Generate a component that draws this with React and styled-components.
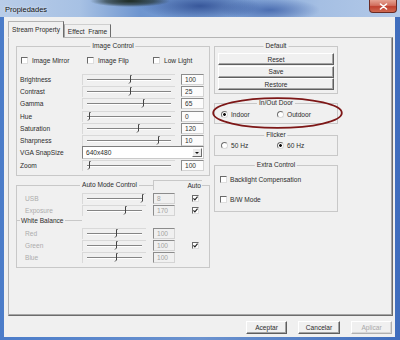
import React from "react";
import styled, { createGlobalStyle } from "styled-components";

const GlobalStyle = createGlobalStyle`
  html, body {
    margin: 0;
    padding: 0;
    background: #fff;
  }
  body {
    font-family: "Liberation Sans", Arial, sans-serif;
    font-size: 6.6px;
    color: #2c2c2c;
  }
`;

const imageSliders = [
  { label: "Brightness", pos: 0.51, value: "100" },
  { label: "Contrast", pos: 0.51, value: "25" },
  { label: "Gamma", pos: 0.67, value: "65" },
  { label: "Hue", pos: 0.02, value: "0" },
  { label: "Saturation", pos: 0.61, value: "120" },
  { label: "Sharpness", pos: 0.85, value: "10" },
];

const autoSliders = [
  { label: "USB", pos: 1, value: "8", auto: true },
  { label: "Exposure", pos: 0.69, value: "170", auto: true },
];

const balanceSliders = [
  { label: "Red", pos: 0.53, value: "100" },
  { label: "Green", pos: 0.53, value: "100", auto: true },
  { label: "Blue", pos: 0.53, value: "100" },
];

const Slider = ({ width, pos }) => (
  <Track $w={width}>
    <Thumb width="5" height="9" viewBox="0 0 5 9" style={{ left: 4 + pos * (width - 9) - 2 }}>
      <path d="M3.6 0.5 H2.5 V7 L1 8.5" fill="none" stroke="#444" strokeWidth="1" />
    </Thumb>
  </Track>
);

const CheckBox = ({ checked }) => (
  <Box>
    {checked && (
      <svg width="5" height="5" viewBox="0 0 5 5">
        <path d="M0.4 2.3 L1.9 3.9 L4.6 0.6" fill="none" stroke="#222" strokeWidth="1.2" />
      </svg>
    )}
  </Box>
);

const App = () => {
  return (
    <>
      <GlobalStyle />
      <Window>
        <TitleBar>
          <TitleText>Propiedades</TitleText>
          <CloseButton>
            <svg width="9" height="7" viewBox="0 0 9 7">
              <path d="M1.5 1 L7.5 6 M7.5 1 L1.5 6" stroke="#fff" strokeWidth="1.6" strokeLinecap="round" />
            </svg>
          </CloseButton>
        </TitleBar>

        <Client>
          <TabStrip>
            <Tab $active $w={56}>Stream Property</Tab>
            <Tab $w={47}>Effect&nbsp; Frame</Tab>
          </TabStrip>

          <TabPage>
            <LeftCol>
              <Group $h={130}>
                <GroupTitle>Image Control</GroupTitle>
                <CheckRow>
                  <CheckItem $w={66}><CheckBox />Image Mirror</CheckItem>
                  <CheckItem $w={66}><CheckBox />Image Flip</CheckItem>
                  <CheckItem><CheckBox />Low Light</CheckItem>
                </CheckRow>
                <SliderList>
                  {imageSliders.map((s) => (
                    <Row key={s.label} $pad={3}>
                      <Label $w={62}>{s.label}</Label>
                      <Slider width={93} pos={s.pos} />
                      <ValueBox $w={23} $ml={6}>{s.value}</ValueBox>
                    </Row>
                  ))}
                  <Row $pad={3}>
                    <Label $w={62}>VGA SnapSize</Label>
                    <Combo>
                      <span>640x480</span>
                      <ComboButton />
                    </Combo>
                  </Row>
                  <Row $pad={3}>
                    <Label $w={62}>Zoom</Label>
                    <Slider width={93} pos={0.02} />
                    <ValueBox $w={23} $ml={6}>100</ValueBox>
                  </Row>
                </SliderList>
              </Group>

              <Group $h={83} $mt={9} $pt={6}>
                <GroupTitle $left={63}>Auto Mode Control</GroupTitle>
                <AutoTab>Auto</AutoTab>
                {autoSliders.map((s) => (
                  <Row key={s.label} $pad={8}>
                    <Label $w={57} $muted>{s.label}</Label>
                    <Slider width={64} pos={s.pos} />
                    <ValueBox $w={22} $ml={7} $disabled>{s.value}</ValueBox>
                    <AutoCell>{s.auto && <CheckBox checked />}</AutoCell>
                  </Row>
                ))}
                <BalanceHeader>
                  <BalanceText>White Balance</BalanceText>
                </BalanceHeader>
                {balanceSliders.map((s) => (
                  <Row key={s.label} $pad={8}>
                    <Label $w={57} $muted>{s.label}</Label>
                    <Slider width={64} pos={s.pos} />
                    <ValueBox $w={22} $ml={7} $disabled>{s.value}</ValueBox>
                    <AutoCell>{s.auto && <CheckBox checked />}</AutoCell>
                  </Row>
                ))}
              </Group>
            </LeftCol>

            <RightCol>
              <Group $h={48} $pt={6} $px={3}>
                <GroupTitle>Default</GroupTitle>
                <ButtonStack>
                  <FaceButton>Reset</FaceButton>
                  <FaceButton>Save</FaceButton>
                  <FaceButton>Restore</FaceButton>
                </ButtonStack>
              </Group>

              <Group $h={21} $mt={9} $pt={5} $px={6}>
                <GroupTitle>In/Out Door</GroupTitle>
                <OptionRow>
                  <OptionItem $w={56}><Radio $on />Indoor</OptionItem>
                  <OptionItem><Radio />Outdoor</OptionItem>
                </OptionRow>
                <Highlight width="131" height="32" viewBox="0 0 131 32">
                  <ellipse cx="65.5" cy="16" rx="64.3" ry="14.9" fill="none" stroke="#7d1717" strokeWidth="1.8" />
                </Highlight>
              </Group>

              <Group $h={21} $mt={11} $pt={4} $px={6}>
                <GroupTitle>Flicker</GroupTitle>
                <OptionRow>
                  <OptionItem $w={56}><Radio />50 Hz</OptionItem>
                  <OptionItem><Radio $on />60 Hz</OptionItem>
                </OptionRow>
              </Group>

              <Group $h={47} $mt={9} $pt={8} $px={5}>
                <GroupTitle>Extra Control</GroupTitle>
                <OptionStack>
                  <OptionItem><CheckBox />Backlight Compensation</OptionItem>
                  <OptionItem><CheckBox />B/W Mode</OptionItem>
                </OptionStack>
              </Group>
            </RightCol>
          </TabPage>

          <ButtonRow>
            <FaceButton $w={41}>Aceptar</FaceButton>
            <FaceButton $w={42}>Cancelar</FaceButton>
            <FaceButton $w={41} $disabled>Aplicar</FaceButton>
          </ButtonRow>
        </Client>
      </Window>
    </>
  );
};

export default App;

const Window = styled.div`
  width: 400px;
  height: 340px;
  display: flex;
  flex-direction: column;
  overflow: hidden;
  background: linear-gradient(90deg, #4b7cc9 0%, #6c93cf 50%, #3f6dbd 100%);
`;

const TitleBar = styled.div`
  height: 17px;
  flex: none;
  display: flex;
  align-items: flex-start;
  background:
    radial-gradient(ellipse 40px 6px at 130px 1px, #1d2a22 0%, rgba(29, 42, 34, 0.6) 60%, rgba(29, 42, 34, 0) 100%),
    radial-gradient(ellipse 60px 14px at 200px 6px, rgba(40, 70, 140, 0.8) 0%, rgba(40, 70, 140, 0) 100%),
    radial-gradient(ellipse 50px 12px at 270px 10px, rgba(50, 85, 160, 0.7) 0%, rgba(50, 85, 160, 0) 100%),
    linear-gradient(90deg, #b9cde8 0%, #a7c1e4 20%, #6e95cf 35%, #7da1d6 60%, #a5bfe3 80%, #b3c9e8 100%);
`;

const TitleText = styled.div`
  padding-left: 5px;
  line-height: 19px;
  font-size: 7.5px;
  color: #111;
  text-shadow: 0 0 3px rgba(255, 255, 255, 0.9);
`;

const CloseButton = styled.div`
  margin-left: auto;
  margin-right: 3px;
  width: 28px;
  height: 13px;
  box-sizing: border-box;
  display: flex;
  align-items: center;
  justify-content: center;
  border: 1px solid #6a2b24;
  border-top: none;
  border-radius: 0 0 4px 4px;
  background: linear-gradient(180deg, #e6a393 0%, #d2705f 45%, #c0412f 55%, #cf6a52 100%);
`;

const Client = styled.div`
  flex: 1;
  margin: 0 5px 3px 4px;
  padding: 4px 2px 0 4px;
  display: flex;
  flex-direction: column;
  background: #f0f0f0;
`;

const TabStrip = styled.div`
  height: 16px;
  flex: none;
  display: flex;
  align-items: flex-end;
  position: relative;
  z-index: 1;
`;

const Tab = styled.div`
  width: ${(p) => p.$w}px;
  height: ${(p) => (p.$active ? 17 : 13)}px;
  margin-bottom: ${(p) => (p.$active ? -1 : 0)}px;
  box-sizing: border-box;
  display: flex;
  align-items: center;
  justify-content: center;
  white-space: nowrap;
  background: #f0f0f0;
  border: 1px solid;
  border-color: ${(p) => (p.$active ? "#b4b4b4 #6c6c6c #f0f0f0 #b4b4b4" : "#cfcfcf #6c6c6c transparent #a8a8a8")};
  border-bottom-width: ${(p) => (p.$active ? 1 : 0)}px;
`;

const TabPage = styled.div`
  height: 279px;
  flex: none;
  box-sizing: border-box;
  display: flex;
  gap: 4px;
  padding: 8px 0 0 7px;
  border: 1px solid;
  border-color: #b4b4b4 #6c6c6c #6c6c6c #b4b4b4;
  box-shadow: inset -1px -1px 0 #a6a6a6;
`;

const LeftCol = styled.div`
  width: 194px;
  display: flex;
  flex-direction: column;
`;

const RightCol = styled.div`
  width: 124px;
  display: flex;
  flex-direction: column;
`;

const Group = styled.div`
  position: relative;
  height: ${(p) => p.$h}px;
  margin-top: ${(p) => p.$mt || 0}px;
  padding: ${(p) => p.$pt || 0}px ${(p) => p.$px || 0}px 0;
  box-sizing: border-box;
  border: 1px solid #c8c8c8;
  display: flex;
  flex-direction: column;
`;

const GroupTitle = styled.span`
  position: absolute;
  top: -5px;
  left: ${(p) => (p.$left != null ? `${p.$left}px` : "50%")};
  transform: ${(p) => (p.$left != null ? "none" : "translateX(-50%)")};
  padding: 0 2px;
  line-height: 8px;
  white-space: nowrap;
  background: #f0f0f0;
`;

const AutoTab = styled.div`
  position: absolute;
  left: 136px;
  top: -6px;
  width: 49px;
  height: 10px;
  box-sizing: border-box;
  padding: 1px 1px 0 0;
  text-align: right;
  line-height: 8px;
  background: #f0f0f0;
  border-top: 1px solid #c8c8c8;
  border-left: 1px solid #c8c8c8;
`;

const CheckRow = styled.div`
  height: 10px;
  margin-top: 8px;
  padding-left: 4px;
  display: flex;
  align-items: center;
`;

const CheckItem = styled.div`
  width: ${(p) => (p.$w ? `${p.$w}px` : "auto")};
  display: flex;
  align-items: center;
  gap: 4px;
  white-space: nowrap;
`;

const SliderList = styled.div`
  margin-top: 8px;
  display: flex;
  flex-direction: column;
`;

const Row = styled.div`
  height: 12.3px;
  flex: none;
  padding-left: ${(p) => p.$pad}px;
  display: flex;
  align-items: center;
`;

const Label = styled.span`
  width: ${(p) => p.$w}px;
  flex: none;
  white-space: nowrap;
  color: ${(p) => (p.$muted ? "#acacac" : "#2c2c2c")};
`;

const Track = styled.div`
  position: relative;
  width: ${(p) => p.$w}px;
  height: 11px;
  flex: none;
  box-sizing: border-box;
  border-top: 1px solid #d9d9d9;
  border-left: 1px solid #d9d9d9;

  &::before {
    content: "";
    position: absolute;
    left: 4px;
    right: 4px;
    top: 4px;
    height: 1px;
    background: #858585;
    box-shadow: 0 1px 0 #ffffff;
  }
`;

const Thumb = styled.svg`
  position: absolute;
  top: 0;
  display: block;
`;

const ValueBox = styled.div`
  width: ${(p) => p.$w}px;
  height: 11px;
  flex: none;
  margin-left: ${(p) => p.$ml}px;
  box-sizing: border-box;
  padding-left: 3px;
  line-height: 9px;
  border: 1px solid;
  border-color: #8c8c8c #d4d4d4 #d4d4d4 #8c8c8c;
  background: ${(p) => (p.$disabled ? "#f0f0f0" : "#fcfcfc")};
  color: ${(p) => (p.$disabled ? "#a3a3a3" : "#333")};
`;

const Combo = styled.div`
  width: 122px;
  height: 13px;
  flex: none;
  box-sizing: border-box;
  padding: 0 1px 0 3px;
  display: flex;
  align-items: center;
  justify-content: space-between;
  background: #fff;
  border: 1px solid;
  border-color: #7e7e7e #c9c9c9 #c9c9c9 #7e7e7e;
`;

const ComboButton = styled.span`
  width: 10px;
  height: 9px;
  box-sizing: border-box;
  display: flex;
  align-items: center;
  justify-content: center;
  background: #ececec;
  border: 1px solid;
  border-color: #ffffff #6c6c6c #6c6c6c #ffffff;

  &::after {
    content: "";
    border-left: 2px solid transparent;
    border-right: 2px solid transparent;
    border-top: 2px solid #111;
  }
`;

const AutoCell = styled.div`
  margin-left: 17px;
  display: flex;
  align-items: center;
`;

const BalanceHeader = styled.div`
  width: 65px;
  height: 10.4px;
  flex: none;
  background: linear-gradient(#c8c8c8, #c8c8c8) 0 3px / 100% 1px no-repeat;
`;

const BalanceText = styled.span`
  display: inline-block;
  margin-left: 3px;
  padding: 0 1px;
  line-height: 7px;
  background: #f0f0f0;
  white-space: nowrap;
`;

const Box = styled.span`
  width: 7px;
  height: 7px;
  flex: none;
  box-sizing: border-box;
  display: inline-flex;
  align-items: center;
  justify-content: center;
  background: #fff;
  border: 1px solid;
  border-color: #6a6a6a #dedede #dedede #6a6a6a;
`;

const Radio = styled.span`
  width: 7px;
  height: 7px;
  flex: none;
  box-sizing: border-box;
  border-radius: 50%;
  border: 1px solid;
  border-color: #6f6f6f #d8d8d8 #d8d8d8 #6f6f6f;
  background: ${(p) => (p.$on ? "radial-gradient(circle, #111 0 1.3px, #fff 1.5px)" : "#fff")};
`;

const ButtonStack = styled.div`
  display: flex;
  flex-direction: column;
  gap: 0.5px;
`;

const FaceButton = styled.div`
  height: ${(p) => (p.$w ? 13 : 12)}px;
  width: ${(p) => (p.$w ? `${p.$w}px` : "auto")};
  flex: none;
  box-sizing: border-box;
  display: flex;
  align-items: center;
  justify-content: center;
  white-space: nowrap;
  background: #f0f0f0;
  color: ${(p) => (p.$disabled ? "#a8a8a8" : "#2c2c2c")};
  border: 1px solid;
  border-color: ${(p) => (p.$disabled ? "#ffffff #b0b0b0 #b0b0b0 #ffffff" : "#ffffff #5e5e5e #5e5e5e #ffffff")};
  box-shadow: inset -1px -1px 0 ${(p) => (p.$disabled ? "#d6d6d6" : "#a3a3a3")};
`;

const OptionRow = styled.div`
  height: 10px;
  display: flex;
  align-items: center;
`;

const OptionStack = styled.div`
  display: flex;
  flex-direction: column;
  gap: 10px;
`;

const OptionItem = styled.div`
  width: ${(p) => (p.$w ? `${p.$w}px` : "auto")};
  height: 10px;
  display: flex;
  align-items: center;
  gap: 3px;
  white-space: nowrap;
`;

const Highlight = styled.svg`
  position: absolute;
  left: -3px;
  top: -7px;
  pointer-events: none;
`;

const ButtonRow = styled.div`
  margin-top: 5px;
  margin-right: 1px;
  display: flex;
  justify-content: flex-end;
  gap: 11px;
`;
